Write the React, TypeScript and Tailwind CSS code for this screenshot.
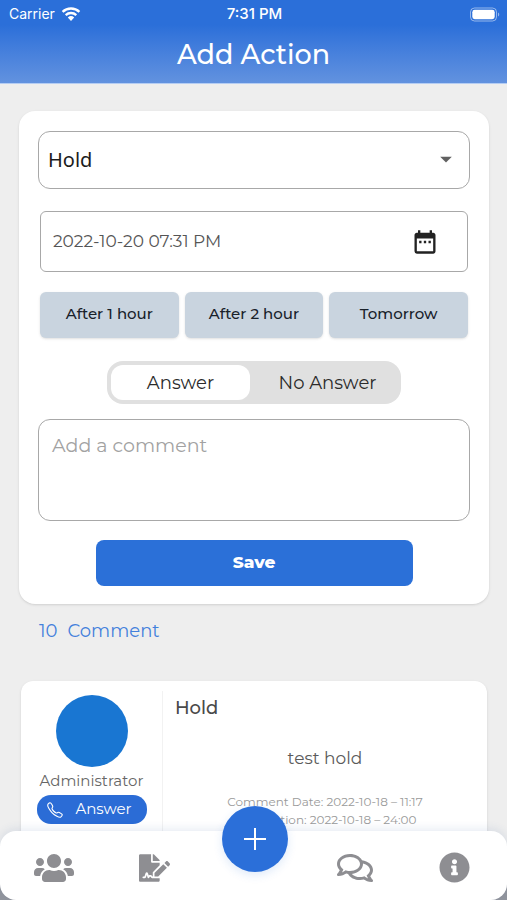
import { useState, type ReactNode } from "react";
import { FaFileSignature, FaInfoCircle, FaRegComments, FaUsers } from "react-icons/fa";
import { MdArrowDropDown, MdDateRange } from "react-icons/md";
import { IoCallOutline } from "react-icons/io5";

function StatusBar() {
  return (
    <div className="grid h-7 grid-cols-3 items-center pr-[7px] pl-[9px] font-['Inter',sans-serif] text-sm text-white">
      <div className="flex items-center gap-1.5">
        <span>Carrier</span>
        <svg viewBox="0 0 20 15" className="h-4 w-5" fill="none" aria-hidden="true">
          <path d="M1.6 5.4a12.2 12.2 0 0 1 16.8 0" stroke="white" strokeWidth="2.4" />
          <path d="M4.7 8.6a7.8 7.8 0 0 1 10.6 0" stroke="white" strokeWidth="2.3" />
          <path d="M10 14.4 6.8 11a4.7 4.7 0 0 1 6.4 0Z" fill="white" />
        </svg>
      </div>
      <span className="text-center text-[15px] font-medium">7:31 PM</span>
      <svg viewBox="0 0 30 15" className="h-[15px] w-[30px] justify-self-end" aria-hidden="true">
        <rect x="0.5" y="1" width="26" height="13" rx="4" fill="none" stroke="white" strokeOpacity="0.5" />
        <rect x="2.3" y="2.8" width="22.4" height="9.4" rx="2.4" fill="white" />
        <path d="M28 5.5c1.7.6 1.7 3.4 0 4Z" fill="white" fillOpacity="0.5" />
      </svg>
    </div>
  );
}

function QuickButton({ children }: { children: ReactNode }) {
  return (
    <button
      type="button"
      className="h-[46px] flex-1 rounded-md bg-[#c9d4df] pb-[2px] text-[15px] font-medium text-[#18212a] shadow-sm"
    >
      {children}
    </button>
  );
}

function AnswerOption({
  label,
  checked,
  onSelect,
}: {
  label: string;
  checked: boolean;
  onSelect: () => void;
}) {
  return (
    <label className="flex flex-1 cursor-pointer">
      <input type="radio" name="answer" className="peer sr-only" checked={checked} onChange={onSelect} />
      <span className="flex flex-1 items-center justify-center rounded-xl text-lg text-[#2b2b2b] peer-checked:bg-white">
        {label}
      </span>
    </label>
  );
}

function ActionForm() {
  const [answer, setAnswer] = useState("Answer");
  const [date, setDate] = useState("2022-10-20 07:31 PM");
  return (
    <form
      className="flex flex-col rounded-2xl bg-white px-[19px] pt-5 pb-[18px] shadow-sm"
      onSubmit={(e) => e.preventDefault()}
    >
      <div className="relative">
        <select
          aria-label="Action"
          className="h-[58px] w-full appearance-none rounded-xl border border-[#a8a8a8] bg-white px-[9px] font-['Noto_Sans',sans-serif] text-xl text-[#1c1c1c]"
        >
          <option>Hold</option>
        </select>
        <MdArrowDropDown className="pointer-events-none absolute top-[14px] right-[10px] size-7 text-[#616161]" />
      </div>

      <div className="mx-[2px] mt-[22px] flex h-[61px] items-center rounded-md border border-[#a8a8a8] pr-7 pl-3">
        <input
          aria-label="Date"
          value={date}
          onChange={(e) => setDate(e.target.value)}
          className="min-w-0 flex-1 bg-transparent pt-px text-[17px] text-[#555555] outline-none"
        />
        <button type="button" aria-label="Pick a date" className="text-[#222222]">
          <MdDateRange className="size-7" />
        </button>
      </div>

      <div className="mx-[2px] mt-5 flex gap-[6px]">
        <QuickButton>After 1 hour</QuickButton>
        <QuickButton>After 2 hour</QuickButton>
        <QuickButton>Tomorrow</QuickButton>
      </div>

      <div className="mt-[23px] flex h-[43px] w-[294px] gap-2 self-center rounded-2xl bg-[#e0e0e0] p-1">
        <AnswerOption label="Answer" checked={answer === "Answer"} onSelect={() => setAnswer("Answer")} />
        <AnswerOption label="No Answer" checked={answer === "No Answer"} onSelect={() => setAnswer("No Answer")} />
      </div>

      <textarea
        aria-label="Comment"
        placeholder="Add a comment"
        className="mt-[15px] h-[102px] resize-none rounded-xl border border-[#a8a8a8] px-[13px] py-3 text-[19px] text-[#333333] placeholder:text-[#a2a2a2]"
      />

      <button
        type="submit"
        className="mt-[19px] h-[46px] w-[317px] self-center rounded-lg bg-[#2b70d8] text-[17px] font-extrabold text-white"
      >
        Save
      </button>
    </form>
  );
}

function CommentCard() {
  return (
    <article className="mx-[2px] mt-[38px] flex h-[166px] rounded-xl bg-white pt-2.5 pb-2 shadow-sm">
      <div className="flex w-[142px] flex-col items-center border-r border-[#f2f2f2] pt-1">
        <div className="size-[72px] rounded-full bg-[#1976d2]" />
        <p className="mt-1 text-[15px] leading-5 text-[#666666]">Administrator</p>
        <p className="mt-1 flex h-[29px] w-[110px] items-center justify-between rounded-[14px] bg-[#2b6cd6] pr-[15px] pl-[9px] text-[15px] text-white">
          <IoCallOutline className="size-[18px]" aria-hidden="true" />
          Answer
        </p>
      </div>
      <div className="flex flex-1 flex-col px-3">
        <h2 className="mt-[5px] text-lg leading-6 font-medium text-[#4a4a4a]">Hold</h2>
        <p className="mt-[26px] text-center text-[17px] leading-6 text-[#5a5a5a]">test hold</p>
        <div className="mt-[23px] text-center text-xs leading-[18px] text-[#9a9a9a]">
          <p>Comment Date: 2022-10-18 – 11:17</p>
          <p>Next Action: 2022-10-18 – 24:00</p>
        </div>
      </div>
    </article>
  );
}

function NavButton({ label, children }: { label: string; children: ReactNode }) {
  return (
    <button type="button" aria-label={label} className="flex h-full flex-1 items-center justify-center pt-1">
      {children}
    </button>
  );
}

function BottomNav() {
  return (
    <footer className="fixed inset-x-0 bottom-0 h-[69px]">
      <div className="absolute inset-x-0 bottom-0 h-4 bg-[#92959d]" />
      <nav className="relative flex h-full rounded-2xl bg-white pr-[2px] pl-1 text-[#8e8e92] shadow-[0_-2px_10px_rgba(50,90,160,0.12)]">
        <NavButton label="Users">
          <FaUsers className="h-8 w-10" />
        </NavButton>
        <NavButton label="Contracts">
          <FaFileSignature className="h-7 w-[31px]" />
        </NavButton>
        <div className="flex flex-1 justify-center">
          <button
            type="button"
            aria-label="Add"
            className="-mt-[25px] flex size-[66px] items-center justify-center rounded-full bg-[#2b6fd9] shadow-[0_3px_10px_rgba(43,111,217,0.15)]"
          >
            <svg viewBox="0 0 24 24" className="size-6" stroke="white" strokeWidth="2" aria-hidden="true">
              <path d="M12 1v22M1 12h22" />
            </svg>
          </button>
        </div>
        <NavButton label="Comments">
          <FaRegComments className="h-8 w-9" />
        </NavButton>
        <NavButton label="Information">
          <FaInfoCircle className="size-[31px]" />
        </NavButton>
      </nav>
    </footer>
  );
}

export default function App() {
  return (
    <div className="h-screen overflow-hidden bg-[#eeeeee] font-['Montserrat','Inter',sans-serif]">
      <header className="h-[84px] border-b border-[#b5cdf3] bg-linear-to-b from-[#2b6fd9] from-30% to-[#6292df]">
        <StatusBar />
        <h1 className="pt-[9px] text-center text-[27px] leading-9 font-medium text-white">Add Action</h1>
      </header>
      <main className="pt-[27px] pr-[18px] pl-[19px]">
        <ActionForm />
        <p className="mt-[15px] flex gap-[10px] pl-5 text-lg leading-6 text-[#4380dc]">
          <span>10</span>
          <span>Comment</span>
        </p>
        <CommentCard />
      </main>
      <BottomNav />
    </div>
  );
}
